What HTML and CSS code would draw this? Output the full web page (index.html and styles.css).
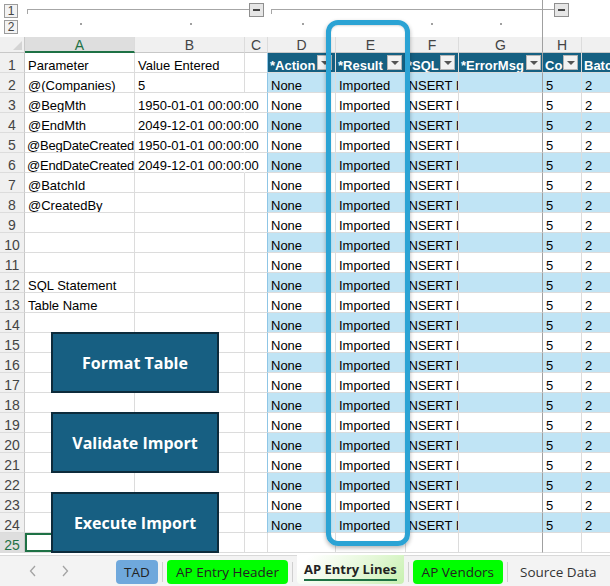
FILE: index.html
```html
<!DOCTYPE html>
<html lang="en">
<head>
<meta charset="utf-8">
<title>AP Entry Lines</title>
<link rel="stylesheet" href="styles.css">
</head>
<body>
<div class="app">
  <div class="outline">
    <div class="levels">
      <div class="lvl">1</div>
      <div class="lvl">2</div>
    </div>
    <div class="grp g1"></div>
    <div class="minus m1"></div>
    <div class="grp g2"></div>
    <div class="minus m2"></div>
    <div class="split"></div>
    <i class="dot" style="left:80px"></i>
    <i class="dot" style="left:190px"></i>
    <i class="dot" style="left:302px"></i>
    <i class="dot" style="left:431px"></i>
    <i class="dot" style="left:500px"></i>
  </div>

  <div class="sheet">
    <div class="row hdr">
      <div class="corner"></div><div class="ch sel">A</div><div class="ch">B</div><div class="ch">C</div><div class="ch">D</div><div class="ch">E</div><div class="ch">F</div><div class="ch">G</div><div class="ch">H</div><div class="ch">I</div>
    </div>
    <div class="row tr">
      <div class="rh">1</div><div class="c">Parameter</div><div class="c">Value Entered</div><div class="c"></div>
      <div class="th"><span>*Action</span><b class="dd"></b></div>
      <div class="th"><span>*Result</span><b class="dd"></b></div>
      <div class="th"><span>*SQL</span><b class="dd"></b></div>
      <div class="th"><span>*ErrorMsg</span><b class="dd"></b></div>
      <div class="th"><span>Co</span><b class="dd"></b></div>
      <div class="th"><span>BatchId</span><b class="dd"></b></div>
    </div>
    <div class="row tr band"><div class="rh">2</div><div class="c">@(Companies)</div><div class="c">5</div><div class="c"></div><div class="t">None</div><div class="t">Imported</div><div class="t">INSERT INTO [dbo]</div><div class="t"></div><div class="t">5</div><div class="t">2</div></div>
    <div class="row tr"><div class="rh">3</div><div class="c">@BegMth</div><div class="c ov">1950-01-01 00:00:00</div><div class="c"></div><div class="t">None</div><div class="t">Imported</div><div class="t">INSERT INTO [dbo]</div><div class="t"></div><div class="t">5</div><div class="t">2</div></div>
    <div class="row tr band"><div class="rh">4</div><div class="c">@EndMth</div><div class="c ov">2049-12-01 00:00:00</div><div class="c"></div><div class="t">None</div><div class="t">Imported</div><div class="t">INSERT INTO [dbo]</div><div class="t"></div><div class="t">5</div><div class="t">2</div></div>
    <div class="row tr"><div class="rh">5</div><div class="c tight">@BegDateCreated</div><div class="c ov">1950-01-01 00:00:00</div><div class="c"></div><div class="t">None</div><div class="t">Imported</div><div class="t">INSERT INTO [dbo]</div><div class="t"></div><div class="t">5</div><div class="t">2</div></div>
    <div class="row tr band"><div class="rh">6</div><div class="c tight">@EndDateCreated</div><div class="c ov">2049-12-01 00:00:00</div><div class="c"></div><div class="t">None</div><div class="t">Imported</div><div class="t">INSERT INTO [dbo]</div><div class="t"></div><div class="t">5</div><div class="t">2</div></div>
    <div class="row tr"><div class="rh">7</div><div class="c">@BatchId</div><div class="c"></div><div class="c"></div><div class="t">None</div><div class="t">Imported</div><div class="t">INSERT INTO [dbo]</div><div class="t"></div><div class="t">5</div><div class="t">2</div></div>
    <div class="row tr band"><div class="rh">8</div><div class="c">@CreatedBy</div><div class="c"></div><div class="c"></div><div class="t">None</div><div class="t">Imported</div><div class="t">INSERT INTO [dbo]</div><div class="t"></div><div class="t">5</div><div class="t">2</div></div>
    <div class="row tr"><div class="rh">9</div><div class="c"></div><div class="c"></div><div class="c"></div><div class="t">None</div><div class="t">Imported</div><div class="t">INSERT INTO [dbo]</div><div class="t"></div><div class="t">5</div><div class="t">2</div></div>
    <div class="row tr band"><div class="rh">10</div><div class="c"></div><div class="c"></div><div class="c"></div><div class="t">None</div><div class="t">Imported</div><div class="t">INSERT INTO [dbo]</div><div class="t"></div><div class="t">5</div><div class="t">2</div></div>
    <div class="row tr"><div class="rh">11</div><div class="c"></div><div class="c"></div><div class="c"></div><div class="t">None</div><div class="t">Imported</div><div class="t">INSERT INTO [dbo]</div><div class="t"></div><div class="t">5</div><div class="t">2</div></div>
    <div class="row tr band"><div class="rh">12</div><div class="c">SQL Statement</div><div class="c"></div><div class="c"></div><div class="t">None</div><div class="t">Imported</div><div class="t">INSERT INTO [dbo]</div><div class="t"></div><div class="t">5</div><div class="t">2</div></div>
    <div class="row tr"><div class="rh">13</div><div class="c">Table Name</div><div class="c"></div><div class="c"></div><div class="t">None</div><div class="t">Imported</div><div class="t">INSERT INTO [dbo]</div><div class="t"></div><div class="t">5</div><div class="t">2</div></div>
    <div class="row tr band"><div class="rh">14</div><div class="c"></div><div class="c"></div><div class="c"></div><div class="t">None</div><div class="t">Imported</div><div class="t">INSERT INTO [dbo]</div><div class="t"></div><div class="t">5</div><div class="t">2</div></div>
    <div class="row tr"><div class="rh">15</div><div class="c"></div><div class="c"></div><div class="c"></div><div class="t">None</div><div class="t">Imported</div><div class="t">INSERT INTO [dbo]</div><div class="t"></div><div class="t">5</div><div class="t">2</div></div>
    <div class="row tr band"><div class="rh">16</div><div class="c"></div><div class="c"></div><div class="c"></div><div class="t">None</div><div class="t">Imported</div><div class="t">INSERT INTO [dbo]</div><div class="t"></div><div class="t">5</div><div class="t">2</div></div>
    <div class="row tr"><div class="rh">17</div><div class="c"></div><div class="c"></div><div class="c"></div><div class="t">None</div><div class="t">Imported</div><div class="t">INSERT INTO [dbo]</div><div class="t"></div><div class="t">5</div><div class="t">2</div></div>
    <div class="row tr band"><div class="rh">18</div><div class="c"></div><div class="c"></div><div class="c"></div><div class="t">None</div><div class="t">Imported</div><div class="t">INSERT INTO [dbo]</div><div class="t"></div><div class="t">5</div><div class="t">2</div></div>
    <div class="row tr"><div class="rh">19</div><div class="c"></div><div class="c"></div><div class="c"></div><div class="t">None</div><div class="t">Imported</div><div class="t">INSERT INTO [dbo]</div><div class="t"></div><div class="t">5</div><div class="t">2</div></div>
    <div class="row tr band"><div class="rh">20</div><div class="c"></div><div class="c"></div><div class="c"></div><div class="t">None</div><div class="t">Imported</div><div class="t">INSERT INTO [dbo]</div><div class="t"></div><div class="t">5</div><div class="t">2</div></div>
    <div class="row tr"><div class="rh">21</div><div class="c"></div><div class="c"></div><div class="c"></div><div class="t">None</div><div class="t">Imported</div><div class="t">INSERT INTO [dbo]</div><div class="t"></div><div class="t">5</div><div class="t">2</div></div>
    <div class="row tr band"><div class="rh">22</div><div class="c"></div><div class="c"></div><div class="c"></div><div class="t">None</div><div class="t">Imported</div><div class="t">INSERT INTO [dbo]</div><div class="t"></div><div class="t">5</div><div class="t">2</div></div>
    <div class="row tr"><div class="rh">23</div><div class="c"></div><div class="c"></div><div class="c"></div><div class="t">None</div><div class="t">Imported</div><div class="t">INSERT INTO [dbo]</div><div class="t"></div><div class="t">5</div><div class="t">2</div></div>
    <div class="row tr band"><div class="rh">24</div><div class="c"></div><div class="c"></div><div class="c"></div><div class="t">None</div><div class="t">Imported</div><div class="t">INSERT INTO [dbo]</div><div class="t"></div><div class="t">5</div><div class="t">2</div></div>
    <div class="row"><div class="rh sel">25</div><div class="c cur"></div><div class="c"></div><div class="c"></div><div class="c"></div><div class="c"></div><div class="c"></div><div class="c"></div><div class="c"></div><div class="c"></div></div>
  </div>

  <div class="tabbar">
    <div class="nav">
      <svg width="8" height="12" viewBox="0 0 8 12"><path d="M6 1 L1.5 6 L6 11" fill="none" stroke="#a3a3a3" stroke-width="1.3"/></svg>
      <svg width="8" height="12" viewBox="0 0 8 12"><path d="M2 1 L6.5 6 L2 11" fill="none" stroke="#a3a3a3" stroke-width="1.3"/></svg>
    </div>
    <div class="tabs">
      <div class="tab blue">TAD</div>
      <span class="sep"></span>
      <div class="tab green">AP Entry Header</div>
      <span class="sep"></span>
      <div class="tab active"><span>AP Entry Lines</span></div>
      <span class="sep"></span>
      <div class="tab green">AP Vendors</div>
      <span class="sep"></span>
      <div class="tab plain">Source Data</div>
      <span class="sep"></span>
    </div>
  </div>

  <div class="shape btn1">Format Table</div>
  <div class="shape btn2">Validate Import</div>
  <div class="shape btn3">Execute Import</div>
  <div class="focus"></div>
</div>
</body>
</html>
```
FILE: styles.css
```css
* { box-sizing: border-box; }
html, body { margin: 0; padding: 0; background: #fff; }
.app {
  position: relative;
  width: 610px;
  height: 586px;
  overflow: hidden;
  font-family: "Liberation Sans", Arial, sans-serif;
  font-size: 13px;
  color: #000;
}

/* outline strip */
.outline { position: relative; height: 37px; }
.levels { display: flex; flex-direction: column; gap: 2px; padding: 4px 0 0 4px; width: 25px; }
.lvl {
  width: 14px; height: 14px;
  border: 1px solid #9c9c9c;
  background: #f3f3f3;
  font-size: 12px; line-height: 12px; text-align: center; color: #444;
}
.grp { position: absolute; top: 9px; height: 5px; border-top: 1px solid #a6a6a6; border-left: 1px solid #a6a6a6; }
.g1 { left: 27px; width: 222px; }
.g2 { left: 271px; width: 283px; }
.minus {
  position: absolute; top: 3px; width: 15px; height: 14px;
  border: 1px solid #8f8f8f; background: #e6e6e6;
}
.minus::after { content: ""; position: absolute; left: 3px; top: 5px; width: 7px; height: 2px; background: #444; }
.m1 { left: 249px; }
.m2 { left: 554px; }
.split { position: absolute; left: 542px; top: 0; width: 1px; height: 37px; background: #a0a0a0; }
.dot { position: absolute; top: 23px; width: 2px; height: 2px; background: #a0a0a0; }

/* grid */
.sheet {
  display: grid;
  grid-template-columns: 25px 110px 110px 23px 68px 70px 53px 84px 39px 70px;
  grid-template-rows: 16px;
  grid-auto-rows: 20px;
  width: 652px;
}
.row { display: contents; }
.row > div {
  border-right: 1px solid #dcdcdc;
  border-bottom: 1px solid #dcdcdc;
  white-space: nowrap;
  overflow: hidden;
  line-height: 13px;
  padding-top: 6px;
}
.corner { background: #f0f0f0; position: relative; border-right-color: #c8c8c8 !important; border-bottom-color: #c8c8c8 !important; }
.corner::after {
  content: ""; position: absolute; right: 2px; bottom: 2px;
  border-left: 9px solid transparent; border-bottom: 9px solid #d4d4d4;
}
.hdr > div { padding-top: 0; }
.ch {
  background: #f0f0f0; color: #444; text-align: center;
  font-size: 14px; line-height: 16px !important;
  border-bottom-color: #c8c8c8 !important;
}
.ch.sel { background: #dedede; color: #1e7145; border-bottom: 2px solid #1e7145 !important; }
.rh {
  background: #f0f0f0; color: #444; text-align: center; font-size: 14px;
  border-right-color: #c8c8c8 !important;
}
.rh.sel { background: #dedede; color: #1e7145; }
.c { padding-left: 3px; }
.c.tight { padding-left: 2px; letter-spacing: -0.2px; }
.c.ov { overflow: visible !important; border-right-color: transparent !important; }
.c.cur { box-shadow: inset 0 0 0 2px #1e7145; }

.row > :nth-child(8) { border-right-color: #a0a0a0; }
.hdr > :nth-child(8) { border-right-color: #a0a0a0 !important; }
.tr > :nth-child(4) { border-right-color: #8fc6e6; }

.th {
  position: relative;
  background: #156082; color: #fff; font-weight: bold;
  padding-left: 2px;
}
.tr > .th:nth-child(7) { padding-left: 1px; }
.dd {
  position: absolute; right: 3px; top: 2px;
  width: 15px; height: 15px;
  background: #f2f2f2; border: 1px solid #b5b5b5;
}
.tr > .th:nth-child(8) .dd { right: 1px; }
.dd::after {
  content: ""; position: absolute; left: 3px; top: 5px;
  border-left: 4px solid transparent; border-right: 4px solid transparent; border-top: 4px solid #555;
}
.th:last-child .dd { display: none; }
.t { padding-left: 3px; background: #fff; }
.tr > .t:nth-child(7) { padding-left: 0; text-indent: -1px; }
.band .t { background: #c0e4f5; }

/* tab bar */
.tabbar {
  display: flex; align-items: stretch;
  height: 33px;
  padding-top: 2px;
  font-family: "Open Sans", "Segoe UI", sans-serif;
  font-size: 13.5px;
  white-space: nowrap;
}
.nav {
  display: flex; align-items: center; gap: 24px; flex: none;
  width: 116px; padding-left: 29px;
  background: #f3f3f3; border-top: 1px solid #d9d9d9;
}
.tabs {
  display: flex; align-items: center; gap: 4px; flex: 1;
  background: #f3f3f3; border-top: 1px solid #d9d9d9;
}
.tab {
  flex: none;
  height: 24px; line-height: 24px; padding: 0 8px; border-radius: 4px; color: #222;
  margin-top: 2px;
}
.tab.blue { background: #6fa8dc; width: 42px; text-align: center; padding: 0; }
.tab.green { background: #00ff00; padding: 0 9px; }
.tab.active {
  align-self: flex-start;
  height: 29px; margin-top: -1px; border-radius: 0 0 4px 4px;
  background: linear-gradient(135deg, #ffffff 10%, #e3f7d6 60%, #c7f1b0 100%);
  font-weight: bold; font-size: 13px; padding: 0 7px; line-height: 28px;
}
.tab.active span { border-bottom: 2px solid #1e7145; padding-bottom: 1px; }
.tab.plain { padding: 0 11px 0 8px; color: #333; }
.sep { flex: none; width: 1px; height: 20px; background: #cfcfcf; margin-top: 2px; }

/* floating shapes */
.shape {
  position: absolute; left: 51px; width: 168px; height: 61px;
  background: #175f82; border: 2px solid #0d2b3b;
  color: #fff; font-family: "Open Sans", sans-serif; font-weight: 700; font-size: 16px;
  display: flex; align-items: center; justify-content: center;
}
.btn1 { top: 332px; }
.btn2 { top: 412px; }
.btn3 { top: 492px; }
.focus {
  position: absolute; left: 326px; top: 20px; width: 84px; height: 526px;
  border: 5px solid #2ba3d4; border-radius: 12px;
  box-shadow: 0 2px 4px rgba(0,0,0,0.3), inset 0 1px 2px rgba(0,0,0,0.15);
}
```
